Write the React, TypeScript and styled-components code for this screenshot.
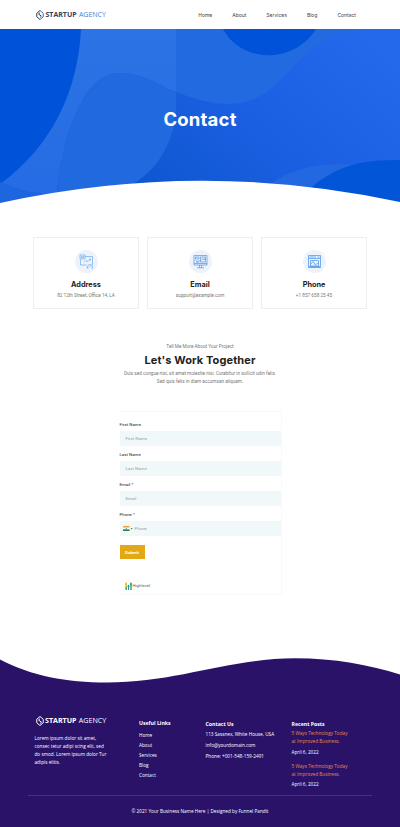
import React from "react";
import styled, { createGlobalStyle } from "styled-components";

const GlobalStyle = createGlobalStyle`
  * {
    box-sizing: border-box;
  }

  body {
    margin: 0;
    background-color: #ffffff;
    font-family: "Open Sans", "Noto Sans", sans-serif;
  }

  h1, h2, h3, h4, p, ul {
    margin: 0;
    padding: 0;
    font-size: inherit;
  }
`;

const Page = styled.div`
  width: 400px;
  height: 827px;
  overflow: hidden;
  display: flex;
  flex-direction: column;
`;

const Header = styled.header`
  height: 29px;
  flex-shrink: 0;
  padding: 0 44px 0 36px;
  display: flex;
  align-items: center;
  justify-content: space-between;
`;

const LogoRow = styled.div<{ $light?: boolean }>`
  display: flex;
  align-items: center;
  height: 11px;
  gap: 1.5px;
  margin-left: ${(props) => (props.$light ? "1px" : "0")};
  font-size: ${(props) => (props.$light ? "7.1px" : "7px")};
  line-height: 11px;
  white-space: nowrap;
  color: ${(props) => (props.$light ? "#ffffff" : "#3c424d")};

  svg {
    display: block;
  }
`;

const LogoName = styled.span`
  font-weight: 700;
`;

const LogoAccent = styled.span<{ $light?: boolean }>`
  margin-left: 0.8px;
  font-weight: 400;
  color: ${(props) => (props.$light ? "#ffffff" : "#3a86dd")};
`;

const Nav = styled.nav`
  display: flex;
  gap: 20px;
  font-family: Inter, "Open Sans", sans-serif;
  font-size: 5px;
  line-height: 8px;
  color: #444444;
`;

const Hero = styled.section`
  display: grid;
  height: 174px;
  flex-shrink: 0;

  > * {
    grid-area: 1 / 1;
  }
`;

const HeroArt = styled.svg`
  display: block;
`;

const HeroTitle = styled.h1`
  z-index: 1;
  padding-top: 78px;
  text-align: center;
  font-family: Inter, "Open Sans", sans-serif;
  font-size: 18.5px;
  line-height: 25px;
  font-weight: 700;
  letter-spacing: 0.2px;
  color: #ffffff;
`;

const Cards = styled.section`
  display: grid;
  grid-template-columns: repeat(3, 1fr);
  gap: 8px;
  padding: 34px 33px 0;
`;

const Card = styled.div`
  height: 72px;
  border: 1px solid #efefef;
  display: flex;
  flex-direction: column;
  align-items: center;
  padding-top: 12px;
`;

const IconCircle = styled.div`
  width: 23px;
  height: 23px;
  border-radius: 50%;
  background-color: #edf2fb;
  display: grid;
  place-items: center;
`;

const CardTitle = styled.h3`
  margin-top: 7px;
  font-family: Inter, "Open Sans", sans-serif;
  font-size: 7.3px;
  line-height: 10px;
  font-weight: 700;
  color: #222222;
`;

const CardText = styled.p`
  margin-top: 2px;
  font-family: Roboto, sans-serif;
  font-size: 4.7px;
  line-height: 8px;
  color: #777777;
`;

const Intro = styled.section`
  margin-top: 34px;
  text-align: center;
  font-family: Roboto, sans-serif;
  font-size: 4.7px;
  line-height: 8px;
  color: #777777;
`;

const IntroTitle = styled.h2`
  margin: 2px 0 2px;
  font-family: Inter, "Open Sans", sans-serif;
  font-size: 11px;
  line-height: 15px;
  font-weight: 700;
  letter-spacing: 0.1px;
  color: #222222;
`;

const Form = styled.form`
  width: 162px;
  height: 184px;
  flex-shrink: 0;
  margin: 25px 0 0 119.5px;
  padding-top: 9px;
  border: 1px solid #f8f9fa;
  border-left: none;
  font-family: Roboto, sans-serif;
`;

const Field = styled.div`
  height: 30px;
`;

const Label = styled.label`
  display: block;
  height: 10px;
  font-size: 4.4px;
  line-height: 8px;
  color: #222222;
`;

const InputBox = styled.div`
  height: 15px;
  padding: 0 6px;
  background-color: #f1f8fa;
  display: flex;
  align-items: center;
  gap: 2px;
  font-size: 4.4px;
  line-height: 8px;
  color: #98a0a4;
`;

const PhoneBox = styled(InputBox)`
  padding-left: 3px;
`;

const Submit = styled.button`
  display: block;
  width: 25px;
  height: 14px;
  margin-top: 4px;
  padding: 0;
  border: none;
  background-color: #e2a914;
  font-family: Roboto, sans-serif;
  font-size: 4.3px;
  font-weight: 700;
  color: #ffffff;
`;

const Brand = styled.div`
  margin: 22px 0 0 5px;
  display: flex;
  align-items: center;
  gap: 1px;
  font-size: 4.3px;
  line-height: 10px;
  color: #5d6266;
`;

const FooterWave = styled.svg`
  display: block;
  flex-shrink: 0;
  margin-top: auto;
`;

const Footer = styled.footer`
  height: 136px;
  flex-shrink: 0;
  background-color: #2a1269;
  color: #ffffff;
  font-size: 4.7px;
  line-height: 8px;
  white-space: nowrap;
`;

const FooterColumns = styled.div`
  display: grid;
  grid-template-columns: 104.5px 66.5px 86px 1fr;
  height: 105px;
  margin: 0 28px;
  padding-left: 6.5px;
  border-bottom: 1px solid #463180;
`;

const FooterColumn = styled.div<{ $top: number }>`
  padding-top: ${(props) => props.$top}px;
`;

const FooterTitle = styled.h4`
  font-size: 5.2px;
  line-height: 8px;
  font-weight: 700;
`;

const About = styled.p`
  margin-top: 9px;
  line-height: 7.9px;
`;

const Links = styled.ul<{ $top: number; $line: number }>`
  margin-top: ${(props) => props.$top}px;
  list-style: none;
  line-height: ${(props) => props.$line}px;
`;

const Post = styled.div`
  margin-top: 1.6px;
  height: 31px;
`;

const PostLink = styled.div`
  color: #e48b45;
`;

const PostDate = styled.div`
  margin-top: 2.5px;
`;

const Copyright = styled.div`
  padding-top: 11px;
  text-align: center;
`;

const Logo: React.FC<{ light?: boolean }> = ({ light }) => (
  <LogoRow $light={light}>
    <svg width="8" height="10" viewBox="0 0 16 20" fill="none" strokeWidth="2">
      <path
        d="M8 1 1.5 6.5v7L8 19M8 5.5 5 8l6 4.5"
        stroke={light ? "#ffffff" : "#353c49"}
      />
      <path
        d="m8 1 6.5 5.5v7L8 19M11 12.5l-3 2.5"
        stroke={light ? "#ffffff" : "#3476bd"}
      />
    </svg>
    <LogoName>STARTUP</LogoName>
    <LogoAccent $light={light}>AGENCY</LogoAccent>
  </LogoRow>
);

const PlanIcon = () => (
  <svg width="15" height="15" viewBox="0 0 30 30" fill="none" stroke="#63a4ec" strokeWidth="1.3">
    <path d="M12 5h15v17M3 11v11h12M2 2h10v8H2zM4 5h3M4 7h6M9 4v3" />
    <path d="m10 17 4-4 4 2 5-5M20 10h3v3" />
    <path d="M17 28v-2a5 5 0 0 1 10 0v2M21 26l3-3M15 28h4M25 28h3" />
  </svg>
);

const MonitorIcon = () => (
  <svg width="15" height="15" viewBox="0 0 30 30" fill="none" stroke="#4c96e8" strokeWidth="1.4">
    <path d="M2 3h26v19H2zM2 19h26M13 22v5M17 22v5M8 27.5h14" />
    <path d="M5 6h7v4H5zM15 6h10v10H15zM5 13l4 3 4-4M17 13l3-4 2 3 3-4M6 16h7" />
  </svg>
);

const BrowserIcon = () => (
  <svg width="15" height="15" viewBox="0 0 30 30" fill="none" stroke="#4c96e8" strokeWidth="1.5">
    <path d="M3 3h24v24H3zM3 9h24M5 6h13M21 6h4" />
    <path d="M7 13h16v11H7zM7 21l5-6 5 7 4-4 2 2" />
    <path d="M4 25.5h22" strokeWidth="2" />
  </svg>
);

const cards = [
  { title: "Address", text: "82 12th Street, Office 14, LA", Icon: PlanIcon },
  { title: "Email", text: "support@example.com", Icon: MonitorIcon },
  { title: "Phone", text: "+1 857 658 25 45", Icon: BrowserIcon },
];

const menu = ["Home", "About", "Services", "Blog", "Contact"];

const fields = [
  { label: "First Name", placeholder: "First Name" },
  { label: "Last Name", placeholder: "Last Name" },
  { label: "Email *", placeholder: "Email" },
];

const HeroBackground = () => (
  <HeroArt width="400" height="174" viewBox="0 29 400 174">
    <defs>
      <linearGradient id="front" x1="0.15" y1="0.7" x2="1" y2="0.2">
        <stop offset="0" stopColor="#0f57d1" />
        <stop offset="0.5" stopColor="#1b60e3" />
        <stop offset="1" stopColor="#2469ec" />
      </linearGradient>
      <linearGradient id="mid" x1="0" y1="0" x2="0" y2="1">
        <stop offset="0" stopColor="#2c73e5" />
        <stop offset="1" stopColor="#256ce4" />
      </linearGradient>
    </defs>
    <path d="M0 29h400v174H0z" fill="#216ae0" />
    <path d="M0 29h176v174H0z" fill="url(#mid)" />
    <path
      d="M56 203C60 160 68 128 78 110C89 83 105 73 121 73C145 73 158 86 176 92C195 99 211 104 229 104C287 102 291 44 347 32C364 28 382 30 400 30V203Z"
      fill="url(#front)"
    />
    <path
      d="M56 203C60 160 68 128 78 110C89 83 105 73 121 73C145 73 158 86 176 92V109C174 142 159 168 133 184V203Z"
      fill="#2169df"
    />
    <path d="M0 29H81C78 91 52 146 0 184Z" fill="#0053d8" />
    <path d="M0 182C13 187 26 192 45 194V203H0Z" fill="#1d66e0" />
    <path d="M223 29C242 64 294 64 316 29Z" fill="#0053d8" />
    <path d="M271 184C291 168 323 162 353 165V203H271Z" fill="#2268e1" />
    <path d="M309 189C331 171 352 159 400 160V203H309Z" fill="#0355d8" />
    <path d="M0 203Q200 159 400 202V204H0Z" fill="#ffffff" />
  </HeroArt>
);

const App: React.FC = () => {
  return (
    <>
      <GlobalStyle />
      <Page>
        <Header>
          <Logo />
          <Nav>
            {menu.map((item) => (
              <span key={item}>{item}</span>
            ))}
          </Nav>
        </Header>

        <Hero>
          <HeroBackground />
          <HeroTitle>Contact</HeroTitle>
        </Hero>

        <Cards>
          {cards.map(({ title, text, Icon }) => (
            <Card key={title}>
              <IconCircle>
                <Icon />
              </IconCircle>
              <CardTitle>{title}</CardTitle>
              <CardText>{text}</CardText>
            </Card>
          ))}
        </Cards>

        <Intro>
          <p>Tell Me More About Your Project</p>
          <IntroTitle>Let's Work Together</IntroTitle>
          <p>
            Duis sed congue nisi, sit amet molestie nisi. Curabitur in sollicit udin felis.
            <br />
            Sed quis felis in diam accumsan aliquam.
          </p>
        </Intro>

        <Form>
          {fields.map((field) => (
            <Field key={field.label}>
              <Label>{field.label}</Label>
              <InputBox>{field.placeholder}</InputBox>
            </Field>
          ))}
          <Field>
            <Label>Phone *</Label>
            <PhoneBox>
              <svg width="10" height="5" viewBox="0 0 10 5">
                <path d="M0 0h6.5v1.7H0z" fill="#f49b3c" />
                <path d="M0 1.7h6.5v1.6H0z" fill="#ffffff" />
                <path d="M0 3.3h6.5V5H0z" fill="#2a8b36" />
                <circle cx="3.25" cy="2.5" r="0.5" fill="#34449b" />
                <path d="M7.7 2h2l-1 1.2z" fill="#555555" />
              </svg>
              Phone
            </PhoneBox>
          </Field>
          <Submit type="button">Submit</Submit>
          <Brand>
            <svg width="7" height="8" viewBox="0 0 14 16">
              <path d="M0 3 2 0l2 3v4H3v9H1V7H0z" fill="#f5b921" />
              <path d="m5 8 2-3 2 3v2H8v6H6v-6H5z" fill="#2b8bd0" />
              <path d="m10 3 2-3 2 3v4h-.5v9h-3V7H10z" fill="#35b85a" />
              <path d="M1 9h3v7H1z" fill="#4fb848" />
            </svg>
            Highlevel
          </Brand>
        </Form>

        <FooterWave width="400" height="33" viewBox="0 658 400 33">
          <path
            d="M0 659.5C32 676 66 682.5 107 682.5C176 682.5 230 658.3 295 658.3C334 658.3 370 665 400 674.5V691H0Z"
            fill="#2a1269"
          />
        </FooterWave>
        <Footer>
          <FooterColumns>
            <FooterColumn $top={24}>
              <Logo light />
              <About>
                Lorem ipsum dolor sit amet,
                <br />
                consec tetur adipi scing elit, sed
                <br />
                do smod. Lorem ipsum dolor Tur
                <br />
                adipis elitis.
              </About>
            </FooterColumn>
            <FooterColumn $top={27.5}>
              <FooterTitle>Useful Links</FooterTitle>
              <Links $top={4.5} $line={9.9}>
                {menu.map((item) => (
                  <li key={item}>{item}</li>
                ))}
              </Links>
            </FooterColumn>
            <FooterColumn $top={29}>
              <FooterTitle>Contact Us</FooterTitle>
              <Links $top={1} $line={10.9}>
                <li>113 Sassnex, White House, USA</li>
                <li>info@yourdomain.com</li>
                <li>Phone: +001-548-159-2491</li>
              </Links>
            </FooterColumn>
            <FooterColumn $top={28.5}>
              <FooterTitle>Recent Posts</FooterTitle>
              {[1, 2].map((id) => (
                <Post key={id}>
                  <PostLink>
                    5 Ways Technology Today
                    <br />
                    at Improved Business.
                  </PostLink>
                  <PostDate>April 6, 2022</PostDate>
                </Post>
              ))}
            </FooterColumn>
          </FooterColumns>
          <Copyright>© 2021 Your Business Name Here | Designed by Funnel Pandit</Copyright>
        </Footer>
      </Page>
    </>
  );
};

export default App;
